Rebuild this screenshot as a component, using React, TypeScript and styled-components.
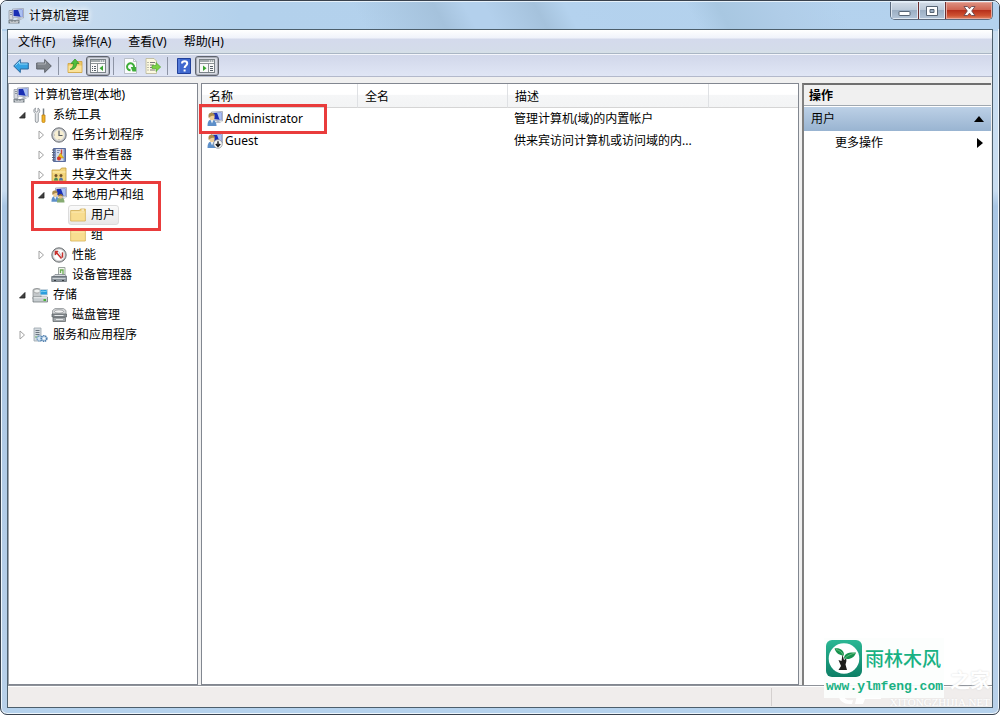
import React from 'react';
import styled, { createGlobalStyle } from 'styled-components';

const GlobalStyle = createGlobalStyle`
  *, *::before, *::after { box-sizing: border-box; }
  body {
    margin: 0;
    background: #ffffff;
    color: #000;
    font: 12px/16px 'Noto Sans', 'Noto Sans CJK SC', sans-serif;
  }
  button { font: inherit; color: inherit; padding: 0; border: 0; background: none; }
  ul { list-style: none; margin: 0; padding: 0; }
`;

/* ---------- window frame ---------- */

const Frame = styled.div`
  position: relative;
  display: flex;
  flex-direction: column;
  min-height: 100vh;
  padding: 0 6px 6px;
  border: 1px solid #39424e;
  border-radius: 7px;
  box-shadow: inset 0 0 0 1px #eef6fc;
  background:
    linear-gradient(#c9ddf0 0, #c9ddf0 160px, #a9c6e4 175px, #b9d1ea 100%) 0 30px / 7px 100% no-repeat,
    linear-gradient(#c9ddf0 0, #c9ddf0 160px, #a9c6e4 175px, #b9d1ea 100%) 100% 30px / 7px 100% no-repeat,
    #b5d2ed;
`;

const TitleBar = styled.header`
  display: flex;
  justify-content: space-between;
  height: 28px;
  margin: 0 -6px;
  border-radius: 6px 6px 0 0;
  border-top: 1px solid #e6f1fa;
  background:
    linear-gradient(62deg, transparent 36%, #a5c2dc 44%, #b3d0ec 47%, #b3d0ec 49%, #a5c2dc 54%, #b4d2ee 57%, transparent 66%, transparent 69%, #a8c7e1 72%, #b0cde8 78%, transparent 84%),
    linear-gradient(90deg, #d2e2f2 0, #c3d9ee 10%, #b3d1ec 24%, #b4d2ee 100%);
`;

const TitleCaption = styled.div`
  display: flex;
  align-items: center;
  gap: 5px;
  padding-left: 7px;
`;

const Title = styled.h1`
  margin: 0;
  font-size: 12px;
  font-weight: 400;
  text-shadow: 0 0 6px #fff, 0 0 6px #fff;
`;

const Captions = styled.div`
  display: flex;
  height: 18px;
  margin-right: 6px;
  border: 1px solid #5b6b7e;
  border-top: 0;
  border-radius: 0 0 5px 5px;
  overflow: hidden;
`;

const CaptionButton = styled.button<{ $close?: boolean }>`
  display: flex;
  align-items: center;
  justify-content: center;
  width: ${p => (p.$close ? 47 : 27)}px;
  box-shadow: inset 0 0 0 1px ${p => (p.$close ? '#e9a79b' : '#dfe8f2')};
  background: ${p =>
    p.$close
      ? 'linear-gradient(#dd9384 0, #cf6552 45%, #b7301c 50%, #cf5232 80%, #e08a68 100%)'
      : 'linear-gradient(#d3dce7 0, #bccad9 45%, #9cafc4 50%, #b3c5d8 100%)'};
  & + & { border-left: 1px solid ${p => (p.$close ? '#6d3030' : '#6c7d90')}; }
`;

const Client = styled.div`
  flex: 1;
  display: flex;
  flex-direction: column;
  border: 1px solid #4d5f6c;
  background: #f0f0f0;
`;

/* ---------- menu and toolbar ---------- */

const MenuBar = styled.nav`
  display: flex;
  gap: 1px;
  height: 24px;
  padding-left: 2px;
  border-bottom: 1px solid #aab6c4;
  background: linear-gradient(#ffffff 0, #f0f3fb 34%, #d4daec 40%, #d4dcea 85%, #d6e0e6 100%);
`;

const MenuItem = styled.button`
  padding: 0 8px;
`;

const ToolBar = styled.div`
  display: flex;
  align-items: center;
  height: 23px;
  padding-left: 1px;
  border-top: 1px solid #f4f6fc;
  border-bottom: 1px solid #b3b9cb;
  background: linear-gradient(#d1d7ea, #e0e6f5);
`;

const ToolButton = styled.button<{ $pressed?: boolean }>`
  display: flex;
  align-items: center;
  justify-content: center;
  width: ${p => (p.$pressed ? 24 : 23)}px;
  height: 20px;
  border: ${p => (p.$pressed ? '1px solid #5f646e' : '0')};
  border-radius: 3px;
  background: ${p => (p.$pressed ? '#d8dbe3' : 'transparent')};
  box-shadow: ${p => (p.$pressed ? 'inset 0 0 0 1px #a9adb8' : 'none')};
`;

const Divider = styled.span`
  width: 1px;
  height: 18px;
  margin: 0 4px 0 3px;
  background: #8d94a5;
`;

/* ---------- panes ---------- */

const Panes = styled.main`
  flex: 1;
  display: grid;
  grid-template-columns: 190px minmax(0, 1fr) 190px;
  column-gap: 3px;
  padding-top: 6px;
`;

const TreePane = styled.section`
  position: relative;
  padding: 1px 0;
  border: 1px solid #828790;
  border-left-color: #a0a5ad;
  background: #fff;
`;

const TreeRow = styled.li<{ $level: number }>`
  display: flex;
  align-items: center;
  height: 20px;
  padding-left: ${p => 4 + p.$level * 19}px;
`;

const Toggle = styled.button`
  display: flex;
  align-items: center;
  justify-content: center;
  width: 14px;
  height: 16px;
  margin: 0 3px 0 -17px;
`;

const Node = styled.span<{ $selected?: boolean }>`
  display: flex;
  align-items: center;
  gap: 5px;
  height: 20px;
  margin-left: -2px;
  padding: 0 3px 0 1px;
  border: 1px solid ${p => (p.$selected ? '#dcdcdc' : 'transparent')};
  border-radius: 3px;
  background: ${p => (p.$selected ? 'linear-gradient(#fafafa, #e8e8e8)' : 'none')};
  white-space: nowrap;
`;

const ListPane = styled.section`
  position: relative;
  border: 1px solid #828790;
  background: #fff;
`;

const Table = styled.table`
  width: 100%;
  table-layout: fixed;
  border-collapse: separate;
  border-spacing: 0;
`;

const HeadCell = styled.th`
  height: 24px;
  padding: 2px 7px 0;
  border-right: 1px solid #dfe1e4;
  border-bottom: 1px solid #d5d5d5;
  background: linear-gradient(#ffffff 0, #ffffff 45%, #f5f6f7 50%, #f3f4f5 100%);
  font-weight: 400;
  text-align: left;
  &:last-child { border-right: 0; }
`;

const Cell = styled.td`
  height: 22px;
  padding: 0 6px;
  overflow: hidden;
  white-space: nowrap;
`;

const UserName = styled.span`
  display: flex;
  align-items: center;
  gap: 2px;
  margin-left: -1px;
`;

const Marker = styled.span<{ $area: 'tree' | 'list' }>`
  position: absolute;
  border: 3px solid #e93c3c;
  pointer-events: none;
  ${p =>
    p.$area === 'tree'
      ? 'top: 97px; left: 22px; width: 130px; height: 50px;'
      : 'top: 20px; left: -3px; width: 128px; height: 30px;'}
`;

const ActionPane = styled.aside`
  margin: 0 1px 0 0;
  border-top: 2px solid #6f6f6f;
  border-left: 2px solid #808080;
  background: #fff;
`;

const ActionHeading = styled.h2`
  margin: 0 0 1px;
  height: 21px;
  padding: 2px 5px 0;
  border-bottom: 1px solid #a0a8b0;
  background: #f0f0f0;
  font-size: 12px;
  line-height: 17px;
  font-weight: 700;
`;

const ActionGroup = styled.button`
  display: flex;
  align-items: center;
  justify-content: space-between;
  width: 100%;
  height: 24px;
  padding: 0 7px;
  background: linear-gradient(#bcd0e6, #99b4d1);
`;

const ActionItem = styled(ActionGroup)`
  padding: 0 7px 0 31px;
  background: none;
`;

const StatusBar = styled.footer`
  display: flex;
  height: 22px;
  border-top: 1px solid #8e9299;
  box-shadow: inset 0 1px 0 #fff;
  background: #f0edec;
`;

const StatusPart = styled.span<{ $width?: number }>`
  flex: ${p => (p.$width ? `0 0 ${p.$width}px` : '1')};
  margin: 2px 0 1px;
  border-right: ${p => (p.$width ? '0' : '1px solid #d4d0cf')};
`;

/* ---------- site stamps over the corner ---------- */

const Stamp = styled.div`
  position: absolute;
  right: 55px;
  bottom: 16px;
  width: 120px;
  height: 60px;
  padding: 1px 2px;
  background: rgba(252, 254, 253, 0.93);
  color: #18b183;
`;

const StampTop = styled.div`
  display: flex;
  align-items: center;
  gap: 3px;
  height: 38px;
  font: 500 19px/38px 'Noto Sans CJK SC', sans-serif;
  white-space: nowrap;
`;

const StampUrl = styled.div`
  font: 700 13px/20px 'Liberation Mono', monospace;
`;

const Ghost = styled.div`
  position: absolute;
  right: 9px;
  bottom: 6px;
  display: flex;
  flex-direction: column;
  gap: 4px;
  align-items: flex-end;
  color: #fff;
  font: 700 20px/24px 'Noto Sans CJK SC', sans-serif;
  text-shadow: 0 0 2px #d8d8d8;
`;

const GhostUrl = styled.span`
  font: 11px/12px 'Liberation Serif', serif;
`;

const GhostMark = styled.svg`
  position: absolute;
  right: 107px;
  bottom: 1px;
`;

/* ---------- icons ---------- */

type IconName =
  | 'computer' | 'tools' | 'clock' | 'events' | 'share' | 'users' | 'folder'
  | 'perf' | 'device' | 'storage' | 'disk' | 'services' | 'user' | 'guest'
  | 'back' | 'forward' | 'up' | 'treeView' | 'actionView' | 'refresh' | 'export' | 'help';

const monitor = (
  <>
    <path d="M4.500 1 15.500.5v9.500L4.500 9Z" fill="#e6e9ee" stroke="#9aa2b2" strokeWidth=".8" />
    <path d="M5.500 2 14.500 1.500v7.500L5.500 8Z" fill="#1a2fb4" />
    <path d="M10 1.800 14.500 1.500v7.500L12.500 8.700Z" fill="#a9c0f2" />
    <path d="M9.500 9.700h3v1.300l2 1H7.500L9.500 11Z" fill="#b5bbc6" />
  </>
);

const person = (
  <>
    <path d="M.5 15C.5 10.500 2 8.500 4.500 8.500S9.500 10.500 9.500 15Z" fill="#5d8fc9" />
    <path d="M3.500 9h3l-1.500 3.500Z" fill="#eaf2fa" />
    <ellipse cx="5" cy="6" rx="2.600" ry="3.300" fill="#efcf97" />
    <path d="M1.800 7C.5 2 3.500 1.500 5 1.800c2 .3 3 1.700 2.700 2.900C6 4.700 4.500 4.300 3.500 5.500Z" fill="#a98a4c" />
  </>
);

const windowShape = (
  <>
    <rect x="1.500" y="1.500" width="15" height="13" fill="#f9faf9" stroke="#7b8388" />
    <path d="M2 3h14" stroke="#a3abad" strokeWidth="2" />
    <path d="M2 5.500h14" stroke="#8d9496" />
    <path d="M11 3h1M13 3h1M15 3h1" stroke="#fff" />
  </>
);

const drawings: Record<IconName, React.ReactNode> = {
  computer: (
    <>
      <path d="M1 2.500h4v9H1Z" fill="#d5d8dd" stroke="#8b939e" strokeWidth=".7" />
      <path d="M2 4.500h2M2 6.500h2" stroke="#8b939e" />
      {monitor}
      <path d="M.5 12h11v3.500H.5Z" fill="#757e85" />
      <path d="M1.500 13.300h2M4.500 13.300h2M7.500 13.300h3M2 14.700h8" stroke="#e9ebed" strokeWidth=".8" />
    </>
  ),
  tools: (
    <>
      <path d="M3.500 1 3 4l1.500 1L6 4V1c2.500 1.500 2 4.500.3 5.500V14c0 2-3 2-3 0V6.500C1 5 1.500 2 3.500 1Z" fill="#e4e6e8" stroke="#858b92" strokeWidth=".8" />
      <path d="M11.500 1.500v7" stroke="#777e85" strokeWidth="1.500" />
      <path d="M10 8h3v6.500c0 1.500-3 1.500-3 0Z" fill="#f0b429" stroke="#bd7d13" strokeWidth=".8" />
    </>
  ),
  clock: (
    <>
      <circle cx="8" cy="8" r="7.200" fill="#b7b9bd" stroke="#73777c" />
      <circle cx="8" cy="8" r="5.500" fill="#f7efd2" stroke="#d7d9dc" />
      <path d="M8 4v4.500h3.500" fill="none" stroke="#555c66" strokeWidth="1.200" />
      <path d="M8 3v1M8 12v1M3 8h1" stroke="#999" strokeWidth=".8" />
    </>
  ),
  events: (
    <>
      <path d="M2.500 1.500h12v13h-12Z" fill="#7c90bd" stroke="#5a6c9c" />
      <path d="M5 2h7.500v12H5Z" fill="#d3dbec" />
      <path d="M1 3h3M1 5.500h3M1 8h3M1 10.500h3M1 13h3" stroke="#5a6378" />
      <path d="M6 3.500h3M6 5.500h2" stroke="#7f8db0" />
      <path d="M10.500 2.500v5" stroke="#d0453b" strokeWidth="1.500" />
      <path d="M9.500 6 12.500 11h-6Z" fill="#f2c31b" stroke="#af8a13" strokeWidth=".5" />
      <circle cx="8" cy="11.500" r="2" fill="#d3382e" />
    </>
  ),
  share: (
    <>
      <path d="M1 3h8l1.500-2H15v13H1Z" fill="#f3d67b" stroke="#c39d3e" strokeWidth=".8" />
      <path d="M1.500 5h13" stroke="#fff0b5" />
      <circle cx="5" cy="8.500" r="1.500" fill="#72532a" />
      <path d="M3 13.500c0-4 4-4 4 0Z" fill="#4c8850" />
      <circle cx="10" cy="8.500" r="1.500" fill="#72532a" />
      <path d="M8 13.500c0-4 4-4 4 0Z" fill="#5272a6" />
    </>
  ),
  users: (
    <>
      {monitor}
      <g transform="translate(0 2) scale(.85)">{person}</g>
      <path d="M6 15.500c0-4 1.500-5 3.500-5s4 1 4 5Z" fill="#86ab72" />
      <circle cx="9.500" cy="9.500" r="2.200" fill="#e2bf88" />
      <path d="M7.200 9.500c0-3.500 4.700-3.500 4.700 0-2-1.300-3-1.300-4.700 0Z" fill="#7d6135" />
    </>
  ),
  folder: (
    <>
      <path d="M.7 3.500h8.800l1-1.500h4.800v12H.7Z" fill="#efcd73" stroke="#d2ad53" strokeWidth=".8" />
      <path d="M1.200 5.500h13.600v8H1.200Z" fill="#f8dd90" />
      <path d="M1.200 5h13.600" stroke="#fff2c4" />
      <path d="M11.500 3h2.500" stroke="#fff" />
    </>
  ),
  perf: (
    <>
      <circle cx="8" cy="8" r="7.200" fill="#b0b3b5" stroke="#73777a" />
      <circle cx="8" cy="8" r="5.700" fill="#fff" stroke="#dedede" />
      <path d="M4 8.500V5l3.500-.8L11.500 11V5" fill="none" stroke="#b9c0c6" />
      <path d="M5 5 10.500 11.500M4.500 8V4.500h2.500M11.500 5.500v5" fill="none" stroke="#c9302c" strokeWidth="1.500" />
    </>
  ),
  device: (
    <>
      <path d="M7.500.5h6.500v8H7.500Z" fill="#f1f5ee" stroke="#9ca59f" />
      <path d="M9.500 6V3h2.500v5" fill="none" stroke="#6caf54" strokeWidth="1.300" />
      <path d="M2 9.500 4 7.500h10l1.500 2Z" fill="#d5d9dd" stroke="#757d84" strokeWidth=".7" />
      <path d="M.7 9.500h14.800v5H.7Z" fill="#8b949c" stroke="#5d656d" strokeWidth=".7" />
      <path d="M1.500 11.500h13" stroke="#cbd0d4" />
      <path d="M3 13.500h2M11 13.500h2" stroke="#353b40" />
    </>
  ),
  storage: (
    <>
      <path d="M1 3c0-2 8-2 8 0v9H1Z" fill="#c4c8ca" stroke="#858b8e" strokeWidth=".7" />
      <ellipse cx="5" cy="4" rx="3.300" ry="2" fill="#edf0ef" stroke="#777" strokeWidth=".5" />
      <path d="M8 2.500h7.500v5.500H8Z" fill="#2b9ddd" stroke="#c7d4dd" />
      <path d="M9 5c2-2 4 1 6-1.500" stroke="#8bd9f5" fill="none" />
      <path d="M1 10h14.500v5H1Z" fill="#c6cccf" stroke="#646d70" strokeWidth=".7" />
      <path d="M1.500 10.700h13.500" stroke="#eef1f1" />
      <path d="M11.500 13h2.500" stroke="#46b435" strokeWidth="2" />
    </>
  ),
  disk: (
    <>
      <path d="M1.500 3.500 4 1.500h8.500l2.500 2v4H1.500Z" fill="#d2d4d6" stroke="#85898c" strokeWidth=".7" />
      <ellipse cx="8" cy="4.500" rx="4.500" ry="1.700" fill="#f2f2f2" stroke="#74797c" strokeWidth=".6" />
      <path d="M1 7h14.500v3H1Z" fill="#8b9195" stroke="#565c60" strokeWidth=".7" />
      <path d="M2 10.500h12.500v4H2Z" fill="#a3a8ab" stroke="#565c60" strokeWidth=".7" />
      <path d="M3.500 8.500h9M5 12.500h7" stroke="#e7e9ea" />
    </>
  ),
  services: (
    <>
      <path d="M2 1h7v13H2Z" fill="#d5dbe0" stroke="#9aa4ac" strokeWidth=".8" />
      <path d="M3.500 3.500h4M3.500 5.500h4M3.500 7.500h4" stroke="#6c7780" />
      <path d="M3 10h3" stroke="#66aa5a" />
      <circle cx="7.500" cy="11.500" r="2.500" fill="#d4e5f3" stroke="#719cc3" strokeWidth="1.500" strokeDasharray="1.300 .6" />
      <circle cx="12" cy="11.500" r="2.800" fill="#c7dced" stroke="#517fae" strokeWidth="1.600" strokeDasharray="1.400 .6" />
      <circle cx="12" cy="11.500" r="1" fill="#fff" />
    </>
  ),
  user: <>{monitor}{person}</>,
  guest: (
    <>
      {monitor}
      {person}
      <circle cx="11" cy="11" r="4.300" fill="#f6f6f6" stroke="#91959a" strokeWidth=".8" />
      <path d="M11 8.300v4.700M8.800 11l2.200 2.400 2.200-2.400" fill="none" stroke="#111" strokeWidth="1.400" />
    </>
  ),
  back: (
    <>
      <path d="M.7 8 7.300 1.500V5h8v6h-8v3.500Z" fill="#35a3e4" stroke="#2a669c" />
      <path d="M2.500 7.500 6.500 3.500V6h8" fill="none" stroke="#8fd6f7" />
    </>
  ),
  forward: (
    <>
      <path d="M15.300 8 8.700 1.500V5h-8v6h8v3.500Z" fill="#7e838a" stroke="#5d6269" />
      <path d="M1.500 6h8V3.500" fill="none" stroke="#aeb2b8" />
    </>
  ),
  up: (
    <>
      <path d="M1 5.500h7.500L10 3.500h5v11H1Z" fill="#edc765" stroke="#cfa23c" strokeWidth=".8" />
      <path d="M1.500 7.500h13v6.500h-13Z" fill="#fae29a" />
      <path d="M3 11.500c4.500 0 6.500-2 6.500-6H12L8 1 4 5.500h2.500c0 3-1 4.500-3.500 6Z" fill="#4fbf3c" stroke="#2a8d25" strokeWidth=".7" />
    </>
  ),
  treeView: (
    <>
      {windowShape}
      <path d="M8.500 6v8" stroke="#8d9496" />
      <path d="M3 8.500h1M5 8.500h2M3 10.500h1M5 10.500h2M3 12.500h1M5 12.500h2" stroke="#57616a" />
      <path d="M14 7.500v5.600L10.500 10.300Z" fill="#39a52f" />
    </>
  ),
  actionView: (
    <>
      {windowShape}
      <path d="M10.500 6v8" stroke="#8d9496" />
      <path d="M12 8.500h3M12 10.500h3M12 12.500h3" stroke="#57616a" />
      <path d="M5 7.500v5.600L8.500 10.300Z" fill="#39a52f" />
    </>
  ),
  refresh: (
    <>
      <path d="M2.500.5h9l3 3v12h-12Z" fill="#fbfcfd" stroke="#adb5bc" strokeWidth=".8" />
      <path d="M11.500.5v3h3" fill="none" stroke="#adb5bc" strokeWidth=".8" />
      <path d="M8.500 12.300A3.500 3.500 0 1 1 12 9.200" fill="none" stroke="#3fae3a" strokeWidth="2" />
      <path d="M8.800 9h5.400v4.500H10.500Z" fill="#3fae3a" />
    </>
  ),
  export: (
    <>
      <path d="M1 .5h8l2.500 2.500v12.500H1Z" fill="#fcf9e0" stroke="#b9b595" strokeWidth=".8" />
      <path d="M2.500 4.500h1M5 4.500h5M2.500 7h1M5 7h4M2.500 9.500h1M5 9.500h3M2.500 12h1M5 12h5" stroke="#7a7a78" />
      <path d="M7 7.500h4V4.500L15.700 9 11 13.500v-3H7Z" fill="#7bd344" stroke="#489f2a" strokeWidth=".6" />
    </>
  ),
  help: (
    <>
      <path d="M1.500.5h13v15h-13Z" fill="#3f68cf" stroke="#21409a" />
      <path d="M3 1v14" stroke="#6f8fe4" />
      <path d="M6 5.500C6 2.500 11.200 2.500 11.200 5.500 11.200 7.500 8.600 7.500 8.600 10M8.600 11.500v2" fill="none" stroke="#fff" strokeWidth="2" />
    </>
  ),
};

const IconSvg = styled.svg`
  flex: none;
  display: block;
`;

const Icon = ({ name }: { name: IconName }) => {
  const width = name === 'treeView' || name === 'actionView' ? 18 : 16;
  return (
    <IconSvg width={width} height="16" viewBox={`0 0 ${width} 16`} aria-hidden="true">
      {drawings[name]}
    </IconSvg>
  );
};

/* ---------- data ---------- */

type TreeItem = { level: number; icon: IconName; label: string; open?: boolean; selected?: boolean };

const tree: TreeItem[] = [
  { level: 0, icon: 'computer', label: '计算机管理(本地)' },
  { level: 1, icon: 'tools', label: '系统工具', open: true },
  { level: 2, icon: 'clock', label: '任务计划程序', open: false },
  { level: 2, icon: 'events', label: '事件查看器', open: false },
  { level: 2, icon: 'share', label: '共享文件夹', open: false },
  { level: 2, icon: 'users', label: '本地用户和组', open: true },
  { level: 3, icon: 'folder', label: '用户', selected: true },
  { level: 3, icon: 'folder', label: '组' },
  { level: 2, icon: 'perf', label: '性能', open: false },
  { level: 2, icon: 'device', label: '设备管理器' },
  { level: 1, icon: 'storage', label: '存储', open: true },
  { level: 2, icon: 'disk', label: '磁盘管理' },
  { level: 1, icon: 'services', label: '服务和应用程序', open: false },
];

const users: { icon: IconName; name: string; description: string }[] = [
  { icon: 'user', name: 'Administrator', description: '管理计算机(域)的内置帐户' },
  { icon: 'guest', name: 'Guest', description: '供来宾访问计算机或访问域的内...' },
];

const menus = ['文件(F)', '操作(A)', '查看(V)', '帮助(H)'];

const Arrow = ({ open }: { open: boolean }) => (
  <svg width="8" height="10" viewBox="0 0 8 10" aria-hidden="true">
    {open ? (
      <path d="M7 2.500v5.500H1.500Z" fill="#404040" stroke="#222" strokeWidth=".8" />
    ) : (
      <path d="M2 1v8L6.500 5Z" fill="#fff" stroke="#a2a2a2" />
    )}
  </svg>
);

export default function App() {
  return (
    <>
      <GlobalStyle />
      <Frame>
        <TitleBar>
          <TitleCaption>
            <Icon name="computer" />
            <Title>计算机管理</Title>
          </TitleCaption>
          <Captions>
            <CaptionButton aria-label="最小化">
              <svg width="13" height="12" viewBox="0 0 13 12">
                <rect x="1" y="6.500" width="11" height="4" rx=".5" fill="#fff" stroke="#566474" />
              </svg>
            </CaptionButton>
            <CaptionButton aria-label="最大化">
              <svg width="12" height="12" viewBox="0 0 12 12">
                <path d="M.5 1.500h11v9H.5ZM4 4.500v3h4v-3Z" fill="#fff" fillRule="evenodd" stroke="#566474" />
              </svg>
            </CaptionButton>
            <CaptionButton $close aria-label="关闭">
              <svg width="13" height="12" viewBox="0 0 13 12">
                <path d="M1 1.500h3.500l2 2.300 2-2.300H12L8.700 6l3.300 4.500H8.500l-2-2.300-2 2.300H1L4.300 6Z" fill="#fff" stroke="#6a4a50" strokeWidth=".9" />
              </svg>
            </CaptionButton>
          </Captions>
        </TitleBar>

        <Client>
          <MenuBar>
            {menus.map(m => <MenuItem key={m}>{m}</MenuItem>)}
          </MenuBar>
          <ToolBar>
            <ToolButton aria-label="后退"><Icon name="back" /></ToolButton>
            <ToolButton aria-label="前进"><Icon name="forward" /></ToolButton>
            <Divider />
            <ToolButton aria-label="向上一级"><Icon name="up" /></ToolButton>
            <ToolButton $pressed aria-label="显示/隐藏控制台树"><Icon name="treeView" /></ToolButton>
            <Divider />
            <ToolButton aria-label="刷新"><Icon name="refresh" /></ToolButton>
            <ToolButton aria-label="导出列表"><Icon name="export" /></ToolButton>
            <Divider />
            <ToolButton aria-label="帮助"><Icon name="help" /></ToolButton>
            <ToolButton $pressed aria-label="显示/隐藏操作窗格"><Icon name="actionView" /></ToolButton>
          </ToolBar>

          <Panes>
            <TreePane>
              <ul>
                {tree.map(item => (
                  <TreeRow key={item.label} $level={item.level}>
                    {item.open !== undefined && (
                      <Toggle aria-label={item.open ? '折叠' : '展开'}>
                        <Arrow open={item.open} />
                      </Toggle>
                    )}
                    <Node $selected={item.selected}>
                      <Icon name={item.icon} />
                      {item.label}
                    </Node>
                  </TreeRow>
                ))}
              </ul>
              <Marker $area="tree" />
            </TreePane>

            <ListPane>
              <Table>
                <colgroup>
                  <col width="156" />
                  <col width="150" />
                  <col width="201" />
                  <col />
                </colgroup>
                <thead>
                  <tr>
                    <HeadCell>名称</HeadCell>
                    <HeadCell>全名</HeadCell>
                    <HeadCell>描述</HeadCell>
                    <HeadCell />
                  </tr>
                </thead>
                <tbody>
                  {users.map(u => (
                    <tr key={u.name}>
                      <Cell><UserName><Icon name={u.icon} />{u.name}</UserName></Cell>
                      <Cell />
                      <Cell>{u.description}</Cell>
                      <Cell />
                    </tr>
                  ))}
                </tbody>
              </Table>
              <Marker $area="list" />
            </ListPane>

            <ActionPane>
              <ActionHeading>操作</ActionHeading>
              <ActionGroup>
                用户
                <svg width="10" height="6" viewBox="0 0 10 6"><path d="M5 0l5 6H0Z" /></svg>
              </ActionGroup>
              <ActionItem>
                更多操作
                <svg width="8" height="10" viewBox="0 0 8 10"><path d="M1 0l6 5-6 5Z" /></svg>
              </ActionItem>
            </ActionPane>
          </Panes>

          <StatusBar>
            <StatusPart />
            <StatusPart $width={220} />
          </StatusBar>
        </Client>

        <Ghost>
          之家
          <GhostUrl>XITONGZHIJIA.NET</GhostUrl>
          <GhostMark width="46" height="30" viewBox="0 0 46 30" aria-hidden="true">
            <path d="M3 12c-4 10 2 16 12 15l1-4c-8 1-10-2-8-8ZM20 18h24v4H28l-2 5h-8Z" fill="#fff" />
          </GhostMark>
        </Ghost>
        <Stamp>
          <StampTop>
            <svg width="36" height="37" viewBox="0 0 36 37" aria-hidden="true">
              <defs>
                <linearGradient id="leafTile" x1="0" y1="0" x2="0" y2="1">
                  <stop offset="0" stopColor="#2bb794" />
                  <stop offset="1" stopColor="#0d7f66" />
                </linearGradient>
              </defs>
              <rect width="36" height="37" rx="6" fill="url(#leafTile)" />
              <circle cx="18" cy="18.500" r="15.300" fill="#fff" />
              <path d="M17.500 15.500C14 15.500 10 13.500 8.500 8.500c5-1 9.500 1.500 9.500 6.500Z" fill="#17924f" />
              <path d="M18 18.500c0-5 4-6.500 12-6-1.500 5.500-6.500 7.500-12 6Z" fill="#17924f" />
              <path d="M16.500 14.500 18 20l2-1.500c1 2 0 4-.5 6l1.500 5.500h-8.500l2.500-4-2.500-6 3 1Z" fill="#1d1d1b" />
              <path d="M10 9.500c3 .5 6 2.500 7.500 6M19 18c3-2.500 6-4 10-5" stroke="#7fce8c" fill="none" strokeWidth=".7" />
            </svg>
            雨林木风
          </StampTop>
          <StampUrl>www.ylmfeng.com</StampUrl>
        </Stamp>
      </Frame>
    </>
  );
}
